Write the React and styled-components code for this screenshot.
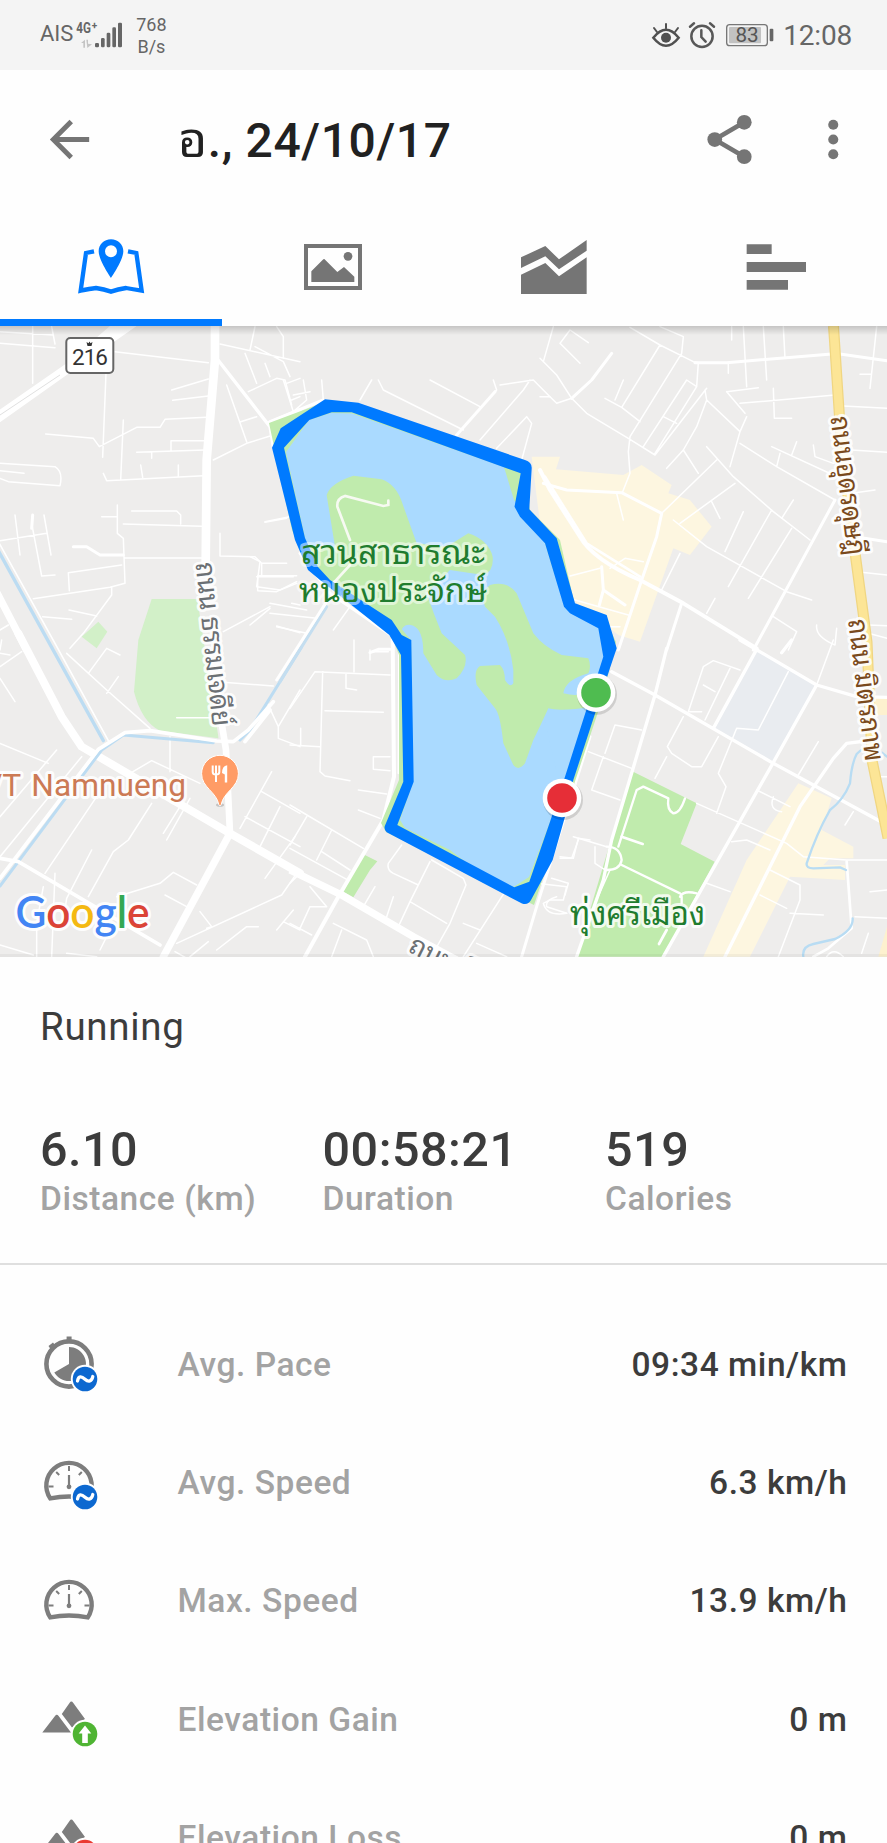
import React from "react";
import styled, { createGlobalStyle } from "styled-components";

const GlobalStyle = createGlobalStyle`
  * { box-sizing: border-box; }
  html, body { margin: 0; padding: 0; background: #fefefe; }
  body { height: 1843px; overflow: hidden; font-family: Roboto, "Noto Sans Thai Looped", "Droid Sans Thai", Loma, Waree, "Noto Sans Thai", "Noto Sans", sans-serif; }
`;

const Screen = styled.main`
  width: 887px;
  height: 1843px;
  overflow: hidden;
  display: flex;
  flex-direction: column;
  background: #fefefe;
`;

const StatusBar = styled.div`
  flex: none;
  height: 70px;
  padding: 0 35px 0 40px;
  display: flex;
  align-items: center;
  justify-content: space-between;
  background: #f4f4f4;
  color: #666;
`;

const StatusGroup = styled.div`
  display: flex;
  align-items: center;
`;

const Carrier = styled.span`
  font-size: 22px;
  line-height: 26px;
  margin-top: -3px;
`;

const NetworkSpeed = styled.span`
  margin: 2px 0 0 9px;
  width: 34px;
  font-size: 18px;
  line-height: 22px;
  text-align: center;
`;

const Clock = styled.span`
  margin: 1px 0 0 9px;
  font-size: 28px;
  line-height: 32px;
  letter-spacing: -0.2px;
`;

const Spacer = styled.span`
  width: ${(p) => p.$width}px;
`;

const Toolbar = styled.header`
  flex: none;
  height: 138px;
  padding: 0 24px 0 40px;
  display: flex;
  align-items: center;
  color: #757575;
`;

const Title = styled.h1`
  flex: 1;
  margin: 3px 0 0 79px;
  font-size: 48px;
  line-height: 60px;
  font-weight: 500;
  letter-spacing: 0.6px;
  color: #212121;
`;

const Weekday = styled.span`
  font-size: 50px;
  font-weight: 400;
`;

const IconButton = styled.button`
  display: flex;
  margin: 0 0 0 ${(p) => p.$gap || 0}px;
  padding: 0;
  border: 0;
  background: none;
  color: inherit;
`;

const Tabs = styled.nav`
  flex: none;
  height: 118px;
  display: grid;
  grid-template-columns: repeat(4, 1fr);
`;

const Tab = styled.div`
  display: flex;
  justify-content: center;
  padding-top: 22px;
  color: ${(p) => (p.$active ? "#007aff" : "#757575")};
  border-bottom: 7px solid ${(p) => (p.$active ? "#007aff" : "transparent")};
`;

const MapPanel = styled.section`
  flex: none;
  height: 631px;
  overflow: hidden;
  svg { display: block; }
`;

const Summary = styled.section`
  flex: none;
  height: 308px;
  padding: 46px 40px 0;
  border-bottom: 2px solid #dfdfdf;
`;

const Activity = styled.h2`
  margin: 0;
  font-size: 38.5px;
  line-height: 48px;
  font-weight: 400;
  letter-spacing: 0.7px;
  color: #3c3c3c;
`;

const Stats = styled.div`
  margin-top: 70px;
  display: grid;
  grid-template-columns: 282.5px 282.5px 1fr;
`;

const StatValue = styled.div`
  font-size: 48.5px;
  line-height: 58px;
  font-weight: 500;
  letter-spacing: 0.5px;
  color: #3c3c3c;
`;

const StatLabel = styled.div`
  font-size: 33.5px;
  line-height: 40px;
  font-weight: 500;
  letter-spacing: 0.55px;
  color: #a3a3a3;
`;

const Details = styled.section`
  flex: none;
  padding-top: 40px;
`;

const Row = styled.div`
  height: 118.3px;
  padding: 0 40px 0 39px;
  display: flex;
  align-items: center;
  font-size: 33.5px;
  font-weight: 500;
  letter-spacing: 0.55px;
`;

const RowLabel = styled.span`
  flex: 1;
  margin-left: 78.5px;
  color: #a3a3a3;
`;

const RowValue = styled.span`
  margin-right: -0.5px;
  color: #3c3c3c;
`;

/* ---------- status icons ---------- */

const SignalIcon = () => (
  <svg width="52" height="40" viewBox="0 0 156 120" fill="#666">
    <g fontWeight="700">
      <text x="10" y="54" fontSize="45" textLength="44" lengthAdjust="spacingAndGlyphs">4G</text>
      <text x="56" y="42" fontSize="30">+</text>
    </g>
    <g fill="#c4c4c4">
      <path d="M24 84l12-10v24h-5V84zM40 74h5v12l12 2-14 11z" />
    </g>
    <rect x="66" y="84" width="12" height="13" rx="4" />
    <rect x="84" y="69" width="11" height="28" rx="4" />
    <rect x="101" y="53" width="11" height="44" rx="4" />
    <rect x="118" y="37" width="11" height="60" rx="4" />
    <rect x="135" y="23" width="12" height="74" rx="4" />
  </svg>
);

const EyeIcon = () => (
  <svg width="30" height="30" viewBox="0 0 90 90" fill="none" stroke="#505050" strokeWidth="7.5" strokeLinecap="round">
    <path d="M7 53Q26 29 45 29T83 53Q64 77 45 77T7 53Z" />
    <circle cx="45" cy="53" r="15" fill="#505050" stroke="none" />
    <path d="M45 12v13M9 24l9 12M81 24l-9 12" strokeWidth="6" />
  </svg>
);

const AlarmIcon = () => (
  <svg width="30" height="30" viewBox="0 0 90 90" fill="none" stroke="#585858" strokeWidth="7.5" strokeLinecap="round">
    <circle cx="45" cy="49" r="32" />
    <path d="M43 31v20l13 14M9 20L21 10M81 20L69 10" />
  </svg>
);

const BatteryIcon = () => (
  <svg width="48" height="24" viewBox="0 0 144 72">
    <rect x="2" y="5" width="122" height="63" rx="9" fill="none" stroke="#777" strokeWidth="4" />
    <rect x="9" y="12" width="96" height="49" rx="3" fill="#c2c2c2" />
    <rect x="131" y="17" width="11" height="38" rx="3" fill="#666" />
    <text x="63" y="57" fontSize="62" textAnchor="middle" fill="#555">83</text>
  </svg>
);

/* ---------- toolbar and tab icons ---------- */

const BackIcon = () => (
  <svg width="59" height="59" viewBox="0 0 24 24" fill="currentColor">
    <path d="M20 11H7.83l5.59-5.59L12 4l-8 8 8 8 1.41-1.41L7.83 13H20v-2z" />
  </svg>
);

const ShareIcon = () => (
  <svg width="59" height="59" viewBox="0 0 24 24" fill="currentColor">
    <path d="M6 12L18 5M6 12l12 7" stroke="currentColor" strokeWidth="1.9" />
    <circle cx="6" cy="12" r="3" />
    <circle cx="18" cy="5" r="3" />
    <circle cx="18" cy="19" r="3" />
  </svg>
);

const MoreIcon = () => (
  <svg width="59" height="59" viewBox="0 0 24 24" fill="currentColor">
    <circle cx="11.9" cy="6" r="2.05" />
    <circle cx="11.9" cy="12" r="2.05" />
    <circle cx="11.9" cy="18" r="2.05" />
  </svg>
);

const TabSvg = ({ children }) => (
  <svg width="74" height="74" viewBox="0 0 222 222" fill="currentColor">{children}</svg>
);

const MapTabIcon = () => (
  <TabSvg>
    <path fillRule="evenodd" d="M111 28c-21 0-37 16-37 36 0 26 37 80 37 80s37-54 37-80c0-20-16-36-37-36zm0 18a18 18 0 1 1 0 36 18 18 0 0 1 0-36z" />
    <path d="M60 64L36 69L20 182Q48 176 66 174Q90 178 111 185Q132 178 156 174Q176 178 203 182L187 69L162 64" fill="none" stroke="currentColor" strokeWidth="13" />
  </TabSvg>
);

const PhotoTabIcon = () => (
  <TabSvg>
    <path fillRule="evenodd" d="M24 42H198V180H24zM36 54V168H186V54z" />
    <circle cx="156" cy="79" r="13" />
    <path d="M46 156V124L82 88L85 87L124 126L144 111L175 140V156Z" />
  </TabSvg>
);

const ChartTabIcon = () => (
  <TabSvg>
    <path d="M12 82L85 48L126 88L209 30V62L126 118L85 79L12 114Z" />
    <path d="M12 134L85 99L126 139L209 82V192H12Z" />
  </TabSvg>
);

const BarsTabIcon = () => (
  <TabSvg>
    <path d="M23 43h75v29H23zM23 96h178v30H23zM23 150h124v29H23z" />
  </TabSvg>
);

/* ---------- detail icons ---------- */

const Badge = ({ color, children }) => (
  <g>
    <circle cx="46" cy="45" r="14.2" fill="#fefefe" />
    <circle cx="46" cy="45" r="12.3" fill={color} />
    {children}
  </g>
);

const AverageBadge = () => (
  <Badge color="#0c68d0">
    <path d="M38.5 47C39.5 41.5 42.5 42 46 45.2S52.8 47.5 53.8 42.5" fill="none" stroke="#fff" strokeWidth="3.3" strokeLinecap="round" />
  </Badge>
);

const PaceIcon = () => (
  <svg width="60" height="60" viewBox="0 0 60 60">
    <circle cx="30" cy="30" r="22.6" fill="none" stroke="#7d7d7d" strokeWidth="4.6" />
    <path d="M27.6 2.5h5v5h-5zM9.5 12l4.5-3.6 3 4-4.5 4z" fill="#7d7d7d" />
    <path d="M30 30V13A17 17 0 1 1 15.3 38.6Z" fill="#7d7d7d" />
    <AverageBadge />
  </svg>
);

const GaugeDrawing = () => (
  <g fill="none" stroke="#7d7d7d">
    <path d="M11.3 46.4A22.7 22.7 0 1 1 48.7 46.4Q30 42.5 11.3 46.4Z" strokeWidth="4.4" />
    <path d="M30 14v5M17.2 20l3 3M42.8 20l-3 3M9.5 34.5h5M45.5 34.5h5" strokeWidth="2" />
    <path d="M30 23v13" strokeWidth="2.2" />
    <circle cx="30" cy="34.8" r="2.4" fill="#7d7d7d" stroke="none" />
  </g>
);

const AvgSpeedIcon = () => (
  <svg width="60" height="60" viewBox="0 0 60 60"><GaugeDrawing /><AverageBadge /></svg>
);

const MaxSpeedIcon = () => (
  <svg width="60" height="60" viewBox="0 0 60 60"><GaugeDrawing /></svg>
);

const ElevationIcon = ({ down }) => (
  <svg width="60" height="60" viewBox="0 0 60 60">
    <path d="M22.8 25L30.5 14Q32.3 11.2 34.3 14L46 30L33 38.5Z" fill="#7d7d7d" />
    <path d="M3.3 43.4L16 27Q17.8 24.6 19.6 27L32 43.4Z" fill="#7d7d7d" />
    <Badge color={down ? "#ea3a32" : "#4fb433"}>
      <path d={down ? "M46 53.5l-6.5-7h3.6v-10h5.8v10h3.6z" : "M46 36.5l6.3 8h-3.5v9.5h-5.6v-9.5h-3.5z"} fill="#fff" />
    </Badge>
  </svg>
);

/* ---------- map ---------- */

const MapText = styled.text`
  font-family: ${(p) => p.$font || '"Noto Sans Thai Looped", "Droid Sans Thai", Loma, Waree, "Noto Sans Thai", "Noto Sans", sans-serif'};
  font-size: ${(p) => p.$size}px;
  font-weight: ${(p) => p.$weight || 400};
  fill: ${(p) => p.$color};
  word-spacing: ${(p) => p.$wordGap || 0}px;
  stroke: rgba(255, 255, 255, ${(p) => p.$halo || 0.65});
  stroke-width: ${(p) => p.$haloWidth || 6}px;
  stroke-linejoin: round;
  paint-order: stroke;
`;

const Roads = styled.g`
  fill: none;
  stroke: ${(p) => p.$color || "#fff"};
  stroke-width: ${(p) => p.$width};
  stroke-linejoin: round;
  stroke-linecap: ${(p) => p.$cap || "round"};
`;

const Tile = ({ x, y, children }) => (
  <g transform={`translate(${x} ${y}) scale(0.33333)`}>{children}</g>
);

const Areas = () => (
  <g>
    <Tile x={0} y={320}>
      <path d="M455 837H592L655 1250V1255L480 1232Q425 1205 402 1115L415 960Z" fill="#d2f0c8" />
      <path d="M295 905L322 935L290 985L245 950Z" fill="#d2f0c8" />
    </Tile>
    <Tile x={540} y={320}>
      <path d="M-25 410H60L48 448L250 465L305 435L395 495L385 520L450 540L515 620L450 705L400 685L300 965L235 945L100 840L80 760L0 610Z" fill="#fdf6e0" />
    </Tile>
    <Tile x={540} y={640}>
      <path d="M652 28L830 135L700 365L525 265Z" fill="#e9ecf0" />
      <path d="M275 393L470 490L422 612L524 665L368 950H108Z" fill="#c0ebad" />
      <path d="M775 430L875 475L845 570L940 620V655H870L850 675H915V720L750 710L630 950H490L620 660Z" fill="#fdf6e0" />
      <path d="M1000 170H1041V225H1000zM1041 860V950H1015z" fill="#fdf1cf" />
    </Tile>
    <Tile x={290} y={640}>
      <path d="M220 643L262 664L240 690L190 772L160 755Z" fill="#c0ebad" />
    </Tile>
  </g>
);

const MinorRoads = () => (
  <Roads $width={4.5}>
    <Tile x={0} y={320}>
      <path d="M0 35L160 45M0 70L165 83M98 20V190M155 20L165 72M345 95L625 128M318 160L308 412M370 300L362 480M137 342L280 355L298 380L410 322H480L495 298L620 292M515 210L625 177M518 241L625 228M410 397L615 390M513 390V362H615M455 397V415M310 460L320 482L610 467M422 435L428 472M535 435V468M0 430L165 440Q190 455 180 497L25 485L0 475M0 452L72 460M395 573H530L542 585V612M370 612L605 619M352 555V640L370 655L375 790L330 802L100 836M375 714H605M305 590H350M205 758L365 735M205 758L208 812M45 585L60 705M0 662L140 640M98 585L95 610L125 768L165 765M132 585L153 705M335 800V825L250 940L210 985M128 890L215 898M207 870L290 888M0 930L25 915M660 72L900 125M680 195L740 365M640 420L740 370L820 345M722 305L770 290M745 215L830 175L855 180L875 255M735 100L770 190M765 80L850 125L870 170M795 130L810 170M765 20L750 90M830 20L850 50V115M860 190L900 175M875 240L900 230M795 607L860 595M660 640V708L765 710L785 730V765M785 730H860M773 767H890M773 767V812L830 815L890 785M670 935L810 860M830 918L900 938M875 850L900 855" />
    </Tile>
    <Tile x={0} y={640}>
      <path d="M0 40L30 45M0 30L5 0M0 115L45 185M0 80L65 35M200 40L320 150L450 265M320 160L355 110M265 100L320 25L360 45M0 310L145 370M0 530L170 330M0 650L245 350M135 700L290 470M530 233H630M650 125L820 138M800 185L835 260V295L900 320M835 260L900 150M510 290V395M390 400L455 362L600 430M455 490L385 600L340 635L265 770M570 475L500 600M540 500L490 580M275 630L200 775L190 840M165 700L155 950M130 740L110 850V950M350 770L480 730L520 697L590 735M495 765L560 800M815 395L720 565M785 455L900 520M735 530L900 620M840 500L780 620M885 590L795 715M890 700L845 765L530 910M600 815L635 860L620 865M830 870L880 810M850 845L900 870M525 935L640 1000M625 905L570 950M650 930L740 860H775M0 915L100 945M200 940L290 950M320 890L300 930" />
    </Tile>
    <Tile x={250} y={380}>
      <path d="M45 425L130 408M0 530L30 545L20 620L90 630L140 610M20 590H130M0 735L60 685M60 670L170 690M60 700L200 715M80 740L170 760M300 680L250 750M100 0L130 95L170 60L160 0M130 45L180 35M215 0L220 60M330 60L365 0M385 0L400 30L640 150M620 165L740 30L730 0M540 0L690 80M690 180L820 30L840 0M740 205L830 110L845 130L815 240M750 15L850 0L900 50" />
    </Tile>
    <Tile x={290} y={640}>
      <path d="M192 0V95M0 205L75 95L300 105M98 95L90 395L105 408L180 422M168 100V145L200 150M105 212L280 217M0 315L90 320M32 265V315M300 350H250V388L300 392M205 450L290 462M205 510L270 535M0 495L220 625M50 530L0 615M125 570L80 660M95 635L180 690M0 625L170 718M240 30V60M242 35H295M335 615L295 670Q290 690 310 700L385 735M420 665L360 785L325 860M360 785L470 850M425 660L520 715L528 735L480 850L435 930M645 755L520 950M520 850L570 870M560 910L650 950M255 740L220 800M310 770L290 830M0 850L65 885M0 730L20 710M60 740L110 800M30 865L60 800L110 800M130 850L230 900L250 950M155 870L125 950M740 730L830 740L820 780H780L760 790Q770 830 830 820M810 650L850 655L865 595L900 600" />
    </Tile>
    <Tile x={540} y={320}>
      <path d="M0 115L50 165L95 235L140 280L265 355L345 405L500 205M0 230L30 230L50 250L95 235M40 20L10 125M60 70L90 30L145 68M60 70L120 130M270 22L360 75L460 125L475 128M360 75L245 262L195 235M250 180L225 240M360 20L430 50L425 100L270 350L265 395L270 460L248 515M245 262L300 305M310 380L440 180L470 200L345 400M370 290L410 310M475 128L470 200M495 210L500 240L470 320L430 390L380 445M430 390L475 460M500 240L600 335L620 290M600 335L570 440M365 580L530 420M500 380L580 470L700 575L810 660M420 610L585 490M515 545L540 595M400 600L500 680L740 815L815 840M610 575L555 695M695 570L565 800M755 625L625 835M760 540L725 595M610 20L620 200M670 20L680 180M730 20L735 115M575 20V60M565 130V160M560 215L655 203M560 215L615 280M600 250L885 225M700 205L703 295H755M885 540L710 440L600 370M695 380L880 465M720 400L710 440M770 365L755 405M820 375L825 410L880 430M910 258L1041 265M935 390L1041 397M1010 20L990 205M960 163H995M935 520L1005 510M950 755L1041 765M985 915L1041 917M985 940L1041 955M420 700L365 810M525 835L500 880M90 768L180 745M230 520L250 600M210 745L255 715L310 725M105 840L265 885M130 920L240 920M700 890L770 935L745 990M830 915Q825 950 885 975L890 925" />
    </Tile>
    <Tile x={540} y={640}>
      <path d="M145 335L275 385M190 350L155 450L240 480M195 340L225 255L305 270M485 215L445 215L490 80L520 62L600 90M570 85L495 240M490 135L525 155M430 230L382 320L395 340L455 380L485 380L535 290M380 350L345 415M655 270L590 265L535 400L558 440L530 520M655 270L745 95M880 0L830 135M650 450L750 500M700 470Q685 510 725 515M835 305L775 405M470 490L740 610L790 650L920 660H1041M575 605L620 600L690 630M500 730L570 755M690 690L780 735V780L715 950M660 765L740 805M750 820L850 825M945 830L1041 835M985 880L965 940M940 515L915 555M100 590L200 620M115 600L95 655H60M165 620V670L195 690M210 690L165 790M35 715L85 730L75 765M50 770Q15 780 20 800L80 820M990 755L1041 750M1000 410H1041M860 950Q880 920 910 950" />
      <path strokeWidth="7" d="M200 620Q240 620 245 660Q240 690 200 690M245 675L420 760M420 770Q430 750 470 760M425 770V790M235 620L290 450L310 440L385 475Q380 510 400 520Q420 520 435 475" />
    </Tile>
  </Roads>
);

const MainRoads = () => (
  <g>
    <Tile x={0} y={320}>
      <Roads $width={26} $cap="butt"><path d="M645 18L645 120L620 420L617 740" /></Roads>
      <Roads $width={10}><path d="M650 115L810 320L820 380" /></Roads>
      <path d="M-5 272L200 130L330 18H410L200 165L-5 310Z" fill="#fff" />
      <path d="M0 285L180 165" stroke="#e0e0e0" strokeWidth="3" />
      <Roads $width={9}><path d="M220 680H260L300 705H370M98 585L95 625" /></Roads>
      <Roads $width={12}><path d="M805 310L900 270" /></Roads>
      <Roads $width={22}><path d="M-8 820L80 990" /></Roads>
      <Roads $width={10} $color="#bcdcf2"><path d="M-5 692L165 1000L310 1262" /></Roads>
      <Roads $width={5}><path d="M-5 665L165 970L325 1262" /></Roads>
    </Tile>
    <Tile x={0} y={640}>
      <Roads $width={24}><path d="M55 -20L185 230L245 320L690 580L900 700" /></Roads>
      <Roads $width={22}><path d="M690 580L490 950" /></Roads>
      <Roads $width={20}><path d="M665 250L678 330L690 580" /></Roads>
      <Roads $width={9} $color="#bcdcf2"><path d="M0 738L305 330L370 285L640 308M720 300L750 270L905 20" /></Roads>
      <Roads $width={11}><path d="M0 715L295 328L375 278L450 272L650 303L700 305L745 270L820 185M735 305L810 210M0 655L55 665L480 915" /></Roads>
    </Tile>
    <Tile x={290} y={640}>
      <Roads $width={22} $cap="butt"><path d="M0 690L155 765L370 890L500 960" /></Roads>
      <Roads $width={12}><path d="M308 0L312 410L280 540L145 770L45 950" /></Roads>
      <Roads $width={5}><path d="M327 0L325 400" /></Roads>
      <Roads $width={9}><path d="M900 290L790 640L740 800L695 950M240 38L265 28H300" /></Roads>
    </Tile>
    <Tile x={250} y={380}>
      <Roads $width={9} $color="#c4def0"><path d="M90 905L230 680" /></Roads>
      <Roads $width={9}><path d="M80 900L230 665M60 125L220 60M620 165L735 35M150 520L240 640L430 770" /></Roads>
    </Tile>
    <Tile x={540} y={320}>
      <Roads $width={12}><path d="M0 450L30 510L120 650Q160 720 300 780L430 850L650 985" /></Roads>
      <Roads $width={8}><path d="M15 470L140 670L300 770" /></Roads>
      <Roads $width={9}><path d="M10 490L80 510L245 518L365 580L350 650L305 780L235 990M425 850L380 990M885 540L640 990M465 128L560 128L875 102L900 102L1041 122M215 100L155 180L95 235M945 650L1041 665M185 740L190 810L255 855M190 810L178 855" /></Roads>
    </Tile>
    <Tile x={540} y={640}>
      <Roads $width={10}><path d="M215 95L345 165L700 370L820 435L1041 555M600 0L830 135L950 170L1041 172M650 28L520 265M830 135L690 385L370 950M380 25L345 165L215 600L190 720L110 950M1000 300L920 310L880 355L780 500L555 950M755 0L725 38" /></Roads>
      <Roads $width={8}><path d="M245 590L308 612M380 870L357 912M920 665L935 865L865 925L820 950" /></Roads>
      <Roads $width={7} $color="#b8dcf3"><path d="M1041 350L1010 325Q975 315 950 342Q935 370 930 430Q910 480 870 510Q830 580 800 670Q798 685 820 685L900 682L918 690M938 835Q940 870 885 897L820 912Q785 920 790 950" /></Roads>
    </Tile>
    <Roads $width={11} $cap="butt" $color="#f0d682"><path d="M833.5 326L841 440L856 560L867 642L872 760L888 838" /></Roads>
    <Roads $width={8.5} $cap="butt" $color="#fce596"><path d="M833.5 326L841 440L856 560L867 642L872 760L888 838" /></Roads>
  </g>
);

const Park = () => (
  <g>
    <path d="M269 423L325 402L358 407L522 466L530 510L560 540L575 606L608 625L616 642L602 700L534 905L386 832L381 823L399 780L399 655L390 632L309 568L292 530Z" fill="#c0ebad" />
    <path d="M286 452L309 420L331 413L352 413.5L504 467L514 500L545 543L564 607L598 628L603 655L591 700L562 788L550 822L529 877L512 888L467 863L450 850L405 828L400 820L413 782L411 640L399 626L310 560Z" fill="#aadaff" />
    <path d="M540 540L566 600L602 622L612 650L600 690L575 775L562 795L540 700Z" fill="#aadaff" />
    <Tile x={250} y={380}>
      <g fill="#c0ebad">
        <path d="M230 345Q240 310 310 287L395 298Q440 315 457 370L500 490L590 500L655 460Q715 480 728 530Q732 575 700 585L600 570Q560 610 530 640Q550 700 575 760L645 825Q655 860 620 895Q585 910 560 885L520 820Q520 750 490 737Q460 725 450 760L210 590L180 500H255Z" />
        <path d="M705 680Q690 640 720 615Q770 600 800 640L850 760Q880 800 935 825L1015 835Q1025 860 1015 880Q945 900 940 940Q980 950 1000 940L1030 980Q930 995 895 985Q870 1040 850 1080L825 1150Q805 1175 790 1155L760 1090Q750 1000 735 985L680 915Q670 870 690 858L750 855Q765 870 765 900Q780 925 790 910L790 870Q780 780 735 710Z" />
      </g>
      <path d="M300 480L262 380Q260 355 285 348L400 378L415 375V362M300 555L200 665" fill="none" stroke="#f7faf2" strokeWidth="8" strokeLinecap="round" />
    </Tile>
  </g>
);

const Route = () => (
  <path
    fill="#007aff"
    fillRule="evenodd"
    d="M272 447.7L280.7 428.3L325 399.3L358.3 402.7L525 460Q532 462 531.7 468.3L529.3 509.3L556.7 538.3L575 603.3L606.7 615L616.7 648.3L610 668L573.3 780L565 816.7L552.7 860L531 900Q528 905.5 522 903.5L386.7 832.3Q383.5 829 385 825.5L403.3 781.7L401 655L389.3 635L320 580L308 570L295 540Z
       M284 447.7L309.3 420L331.7 412.3H351.7L520.7 473.3L514.5 506.7L520 516.7L545 543.3L564 606.7L570 613.3L598.3 628.3L603.3 656.7L565 776.7L550 821.7L529.3 881.7L514.3 887.3L397.3 825L413.7 781.7L411.3 640L401.7 635L391.7 620L330 580L318 567L305 538Z"
  />
);

const RunMarker = ({ x, y, color }) => (
  <g>
    <circle cx={x + 1} cy={y + 2} r="20" fill="#000" opacity="0.13" />
    <circle cx={x} cy={y} r="19.3" fill="#fff" />
    <circle cx={x} cy={y} r="14.8" fill={color} />
  </g>
);

const Shield = () => (
  <g>
    <rect x="66.3" y="338" width="47" height="35" rx="4" fill="#fff" stroke="#666" strokeWidth="2" />
    <path d="M86.5 342l2 1.2 1-1.8 1 1.8 2-1.2-1 4h-4z" fill="#333" />
    <text x="90" y="365" fontSize="22.5" textAnchor="middle" fill="#333" textLength="36">216</text>
  </g>
);

const FoodPin = () => (
  <g>
    <ellipse cx="220" cy="805" rx="4" ry="1.8" fill="#999" opacity="0.5" />
    <path d="M220 755.3a18.4 18.4 0 0 0-18.4 18.4c0 14 15 18 17.2 31 .3 1.2 2.1 1.2 2.4 0 2.2-13 17.2-17 17.2-31A18.4 18.4 0 0 0 220 755.3z" fill="#ff9c66" stroke="#fff" strokeWidth="1" />
    <path d="M212.7 765.5v6.5q0 2.5 3.3 2.5t3.3-2.5v-6.5M216 765.5v16.5" fill="none" stroke="#fff" strokeWidth="2" />
    <path d="M222 773q0-7 5.2-7.8v17.3h-2.4v-8z" fill="#fff" />
  </g>
);

const GoogleLogo = () => (
  <MapText x="15.5" y="927.5" textLength="134" lengthAdjust="spacingAndGlyphs" $size={45} $weight={600} $font="Lato, sans-serif" $halo={0.95} $haloWidth={6} $color="#4285f4">
    G<tspan fill="#db4437">o</tspan><tspan fill="#f4b912">o</tspan>g<tspan fill="#34a853">l</tspan><tspan fill="#db4437">e</tspan>
  </MapText>
);

const ActivityMap = () => (
  <svg width="887" height="631" viewBox="0 326 887 631">
    <defs>
      <linearGradient id="edge" x1="0" y1="0" x2="0" y2="1">
        <stop offset="0" stopColor="#000" stopOpacity="0.17" />
        <stop offset="1" stopColor="#000" stopOpacity="0" />
      </linearGradient>
    </defs>
    <rect y="326" width="887" height="631" fill="#eeedec" />
    <Areas />
    <MinorRoads />
    <MainRoads />
    <Park />
    <Route />
    <MapText x="301" y="563.5" textLength="184" lengthAdjust="spacingAndGlyphs" $size={33} $color="#207c2e" $halo={0.5}>สวนสาธารณะ</MapText>
    <MapText x="299" y="601.7" textLength="188" lengthAdjust="spacingAndGlyphs" $size={33} $color="#207c2e" $halo={0.5}>หนองประจักษ์</MapText>
    <MapText x="570" y="925" textLength="135" lengthAdjust="spacingAndGlyphs" $size={33} $color="#207c2e" $halo={0.8}>ทุ่งศรีเมือง</MapText>
    <MapText transform="translate(195.5 563) rotate(84)" textLength="165" lengthAdjust="spacingAndGlyphs" $size={28} $color="#6b7074" $halo={0.9}>ถนน ธรรมเจดีย์</MapText>
    <MapText transform="translate(830.5 417) rotate(83)" textLength="140" lengthAdjust="spacingAndGlyphs" $size={28} $color="#7a4a1c" $halo={0.9}>ถนนอุดรดุษฎี</MapText>
    <MapText transform="translate(848 620) rotate(83)" textLength="143" lengthAdjust="spacingAndGlyphs" $size={28} $color="#7a4a1c" $halo={0.9}>ถนน มิตรภาพ</MapText>
    <MapText transform="translate(407 951) rotate(27)" $size={27} $color="#6b7074" $halo={0.9}>ถนน โพศรี</MapText>
    <MapText x="186" y="795.7" textAnchor="end" $size={31.7} $font="Roboto, sans-serif" $color="#cc7a55" $halo={0.9} $wordGap={3}>VT Namnueng</MapText>
    <Shield />
    <FoodPin />
    <GoogleLogo />
    <RunMarker x={596} y={692.7} color="#4fbc50" />
    <RunMarker x={562} y={798} color="#e62e37" />
    <rect y="326" width="887" height="9" fill="url(#edge)" />
    <rect y="954" width="887" height="3" fill="#000" opacity="0.04" />
  </svg>
);

const stats = [
  ["6.10", "Distance (km)"],
  ["00:58:21", "Duration"],
  ["519", "Calories"],
];

const details = [
  [<PaceIcon />, "Avg. Pace", "09:34 min/km"],
  [<AvgSpeedIcon />, "Avg. Speed", "6.3 km/h"],
  [<MaxSpeedIcon />, "Max. Speed", "13.9 km/h"],
  [<ElevationIcon />, "Elevation Gain", "0 m"],
  [<ElevationIcon down />, "Elevation Loss", "0 m"],
];

export default function App() {
  return (
    <Screen>
      <GlobalStyle />
      <StatusBar>
        <StatusGroup>
          <Carrier>AIS</Carrier>
          <SignalIcon />
          <NetworkSpeed>768 B/s</NetworkSpeed>
        </StatusGroup>
        <StatusGroup>
          <EyeIcon />
          <Spacer $width={6} />
          <AlarmIcon />
          <Spacer $width={9} />
          <BatteryIcon />
          <Clock>12:08</Clock>
        </StatusGroup>
      </StatusBar>
      <Toolbar>
        <IconButton aria-label="Back"><BackIcon /></IconButton>
        <Title><Weekday>อ</Weekday>., 24/10/17</Title>
        <IconButton aria-label="Share"><ShareIcon /></IconButton>
        <IconButton aria-label="More" $gap={45}><MoreIcon /></IconButton>
      </Toolbar>
      <Tabs>
        <Tab $active><MapTabIcon /></Tab>
        <Tab><PhotoTabIcon /></Tab>
        <Tab><ChartTabIcon /></Tab>
        <Tab><BarsTabIcon /></Tab>
      </Tabs>
      <MapPanel><ActivityMap /></MapPanel>
      <Summary>
        <Activity>Running</Activity>
        <Stats>
          {stats.map(([value, label]) => (
            <div key={label}>
              <StatValue>{value}</StatValue>
              <StatLabel>{label}</StatLabel>
            </div>
          ))}
        </Stats>
      </Summary>
      <Details>
        {details.map(([icon, label, value]) => (
          <Row key={label}>
            {icon}
            <RowLabel>{label}</RowLabel>
            <RowValue>{value}</RowValue>
          </Row>
        ))}
      </Details>
    </Screen>
  );
}
